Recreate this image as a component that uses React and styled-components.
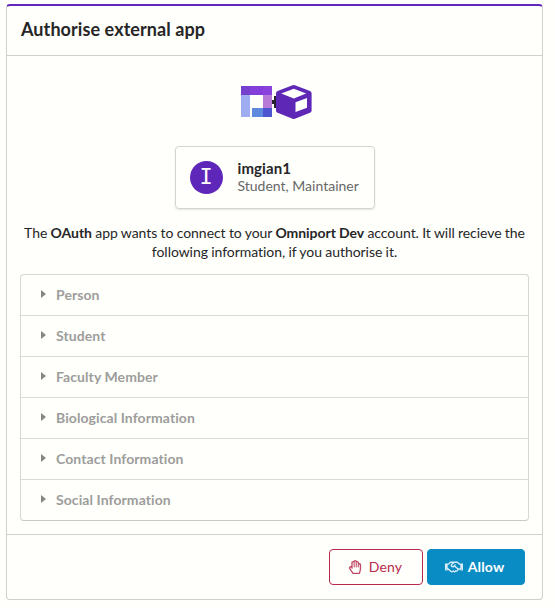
import React from 'react';
import styled, { createGlobalStyle } from 'styled-components';
import { FaRegHandPaper, FaRegHandshake } from 'react-icons/fa';

const GlobalStyle = createGlobalStyle`
  *, *::before, *::after { box-sizing: border-box; }
  body {
    margin: 0;
    background: #fffffc;
    color: #262626;
    font-family: Lato, 'Helvetica Neue', Arial, sans-serif;
    font-size: 14px;
    line-height: 19px;
    font-variant-ligatures: none;
  }
`;

const Panel = styled.main`
  width: 537px;
  height: 596px;
  margin: 4px 0 0 6px;
  display: flex;
  flex-direction: column;
  border: 1px solid #cfd1cd;
  border-top: 2px solid #6127b8;
  border-radius: 4px;
`;

const Header = styled.header`
  height: 50px;
  padding: 12px 14px 0;
  border-bottom: 1px solid #cfd1cd;
`;

const Title = styled.h1`
  margin: 0;
  font-size: 18px;
  line-height: 23px;
  font-weight: 700;
  letter-spacing: 0.08px;
`;

const Body = styled.section`
  flex: 1;
  padding: 28px 13px 0;
  display: flex;
  flex-direction: column;
  align-items: center;
`;

const Logos = styled.svg`
  display: block;
  width: 74px;
  height: 36px;
  margin-left: 5px;
`;

const UserCard = styled.div`
  width: 200px;
  height: 63px;
  margin-top: 26px;
  padding: 0 14px;
  display: flex;
  align-items: center;
  gap: 14px;
  border: 1px solid #d3d5d1;
  border-radius: 4px;
  box-shadow: 0 1px 2px rgba(34, 36, 38, 0.12);
`;

const Avatar = styled.div`
  width: 33px;
  height: 33px;
  flex: none;
  border-radius: 50%;
  display: flex;
  align-items: center;
  justify-content: center;
  padding-bottom: 2px;
  background: #5f27b9;
  color: #fff;
  font-family: 'DejaVu Sans Mono', monospace;
  font-size: 22px;
  line-height: 30px;
`;

const UserText = styled.div`
  display: flex;
  flex-direction: column;
  padding: 0 0 2px 1px;
  line-height: 17px;
  white-space: nowrap;
`;

const UserName = styled.span`
  font-size: 15px;
  font-weight: 700;
  letter-spacing: 0.1px;
`;

const UserRoles = styled.span`
  color: #686868;
`;

const Message = styled.p`
  margin: 14px 0 13px;
  width: 509px;
  text-align: center;
  letter-spacing: -0.05px;
  word-spacing: -0.2px;
`;

const Accordion = styled.ul`
  width: 509px;
  margin: 0;
  padding: 0;
  list-style: none;
  border: 1px solid #d5d7d3;
  border-bottom-color: #c6c8c4;
  border-radius: 4px;
`;

const AccordionRow = styled.li`
  height: 41px;
  padding: 0 0 2px 20px;
  display: flex;
  align-items: center;
  gap: 10px;
  color: #9d9d9b;
  font-weight: 700;
  letter-spacing: 0.08px;
  &:not(:first-child) { border-top: 1px solid #d9dbd7; }
  &:first-child { height: 40px; }
`;

const Caret = styled.svg`
  width: 5px;
  height: 8px;
  fill: #858582;
`;

const Footer = styled.footer`
  height: 65px;
  padding: 14px 17px 0 0;
  display: flex;
  justify-content: flex-end;
  gap: 4px;
  border-top: 1px solid #cfd1cd;
`;

const Button = styled.button`
  width: ${({ $primary }) => ($primary ? 98 : 94)}px;
  height: 36px;
  padding: 0 ${({ $primary }) => ($primary ? 3 : 2)}px 1px 0;
  display: flex;
  align-items: center;
  justify-content: center;
  gap: ${({ $primary }) => ($primary ? 5 : 7)}px;
  border: 1px solid ${({ $primary }) => ($primary ? '#098bc4' : '#b8294b')};
  border-radius: 4px;
  background: ${({ $primary }) => ($primary ? '#098bc4' : 'transparent')};
  color: ${({ $primary }) => ($primary ? '#fff' : '#b8294b')};
  font-family: inherit;
  font-size: 14px;
  font-weight: ${({ $primary }) => ($primary ? 700 : 400)};
  letter-spacing: 0.15px;

  svg { opacity: 0.85; }
`;

const permissions = [
  'Person',
  'Student',
  'Faculty Member',
  'Biological Information',
  'Contact Information',
  'Social Information',
];

function ConnectionLogos() {
  return (
    <Logos viewBox="0 0 74 36" aria-label="OAuth and Omniport">
      <path d="M1 2h9v9H1z" fill="#7540ce" />
      <path d="M10 2h13v9H10z" fill="#843eda" />
      <path d="M23 2h9v9h-9z" fill="#8943dc" />
      <path d="M1 11h9v22H1z" fill="#9eacf0" />
      <path d="M23 11h9v13h-9z" fill="#b77bd7" />
      <path d="M12 24h11v9H12z" fill="#608ade" />
      <path d="M23 24h9v9h-9z" fill="#4d55d0" />
      <path d="M32 16h2v-4h3v12h-3v-4h-2z" fill="#29212e" />
      <path
        d="M54.900 1.200 70 7a2.600 2.600 0 0 1 1.600 2.400v17a2.600 2.600 0 0 1-1.600 2.400l-15.100 6a3.200 3.200 0 0 1-2.300 0l-15-6a2.600 2.600 0 0 1-1.600-2.400v-17A2.600 2.600 0 0 1 37.600 7l15-5.800a3.200 3.200 0 0 1 2.300 0z"
        fill="#5e27b6"
      />
      <path d="m53.800 4.800 12.400 4.700-12.400 4.900-12.600-4.900z" fill="#fffffc" />
      <path d="m55.500 18.300 11.500-4.300v9.800l-11.500 4.300z" fill="#fffffc" />
    </Logos>
  );
}

export default function App() {
  return (
    <>
      <GlobalStyle />
      <Panel>
        <Header>
          <Title>Authorise external app</Title>
        </Header>
        <Body>
          <ConnectionLogos />
          <UserCard>
            <Avatar>I</Avatar>
            <UserText>
              <UserName>imgian1</UserName>
              <UserRoles>Student, Maintainer</UserRoles>
            </UserText>
          </UserCard>
          <Message>
            The <b>OAuth</b> app wants to connect to your <b>Omniport Dev</b>{' '}
            account. It will recieve the following information, if you authorise it.
          </Message>
          <Accordion>
            {permissions.map((name) => (
              <AccordionRow key={name}>
                <Caret viewBox="0 0 5 8"><path d="M0 0 5 4 0 8z" /></Caret>
                {name}
              </AccordionRow>
            ))}
          </Accordion>
        </Body>
        <Footer>
          <Button><FaRegHandPaper size={14} />Deny</Button>
          <Button $primary><FaRegHandshake size={18} />Allow</Button>
        </Footer>
      </Panel>
    </>
  );
}
